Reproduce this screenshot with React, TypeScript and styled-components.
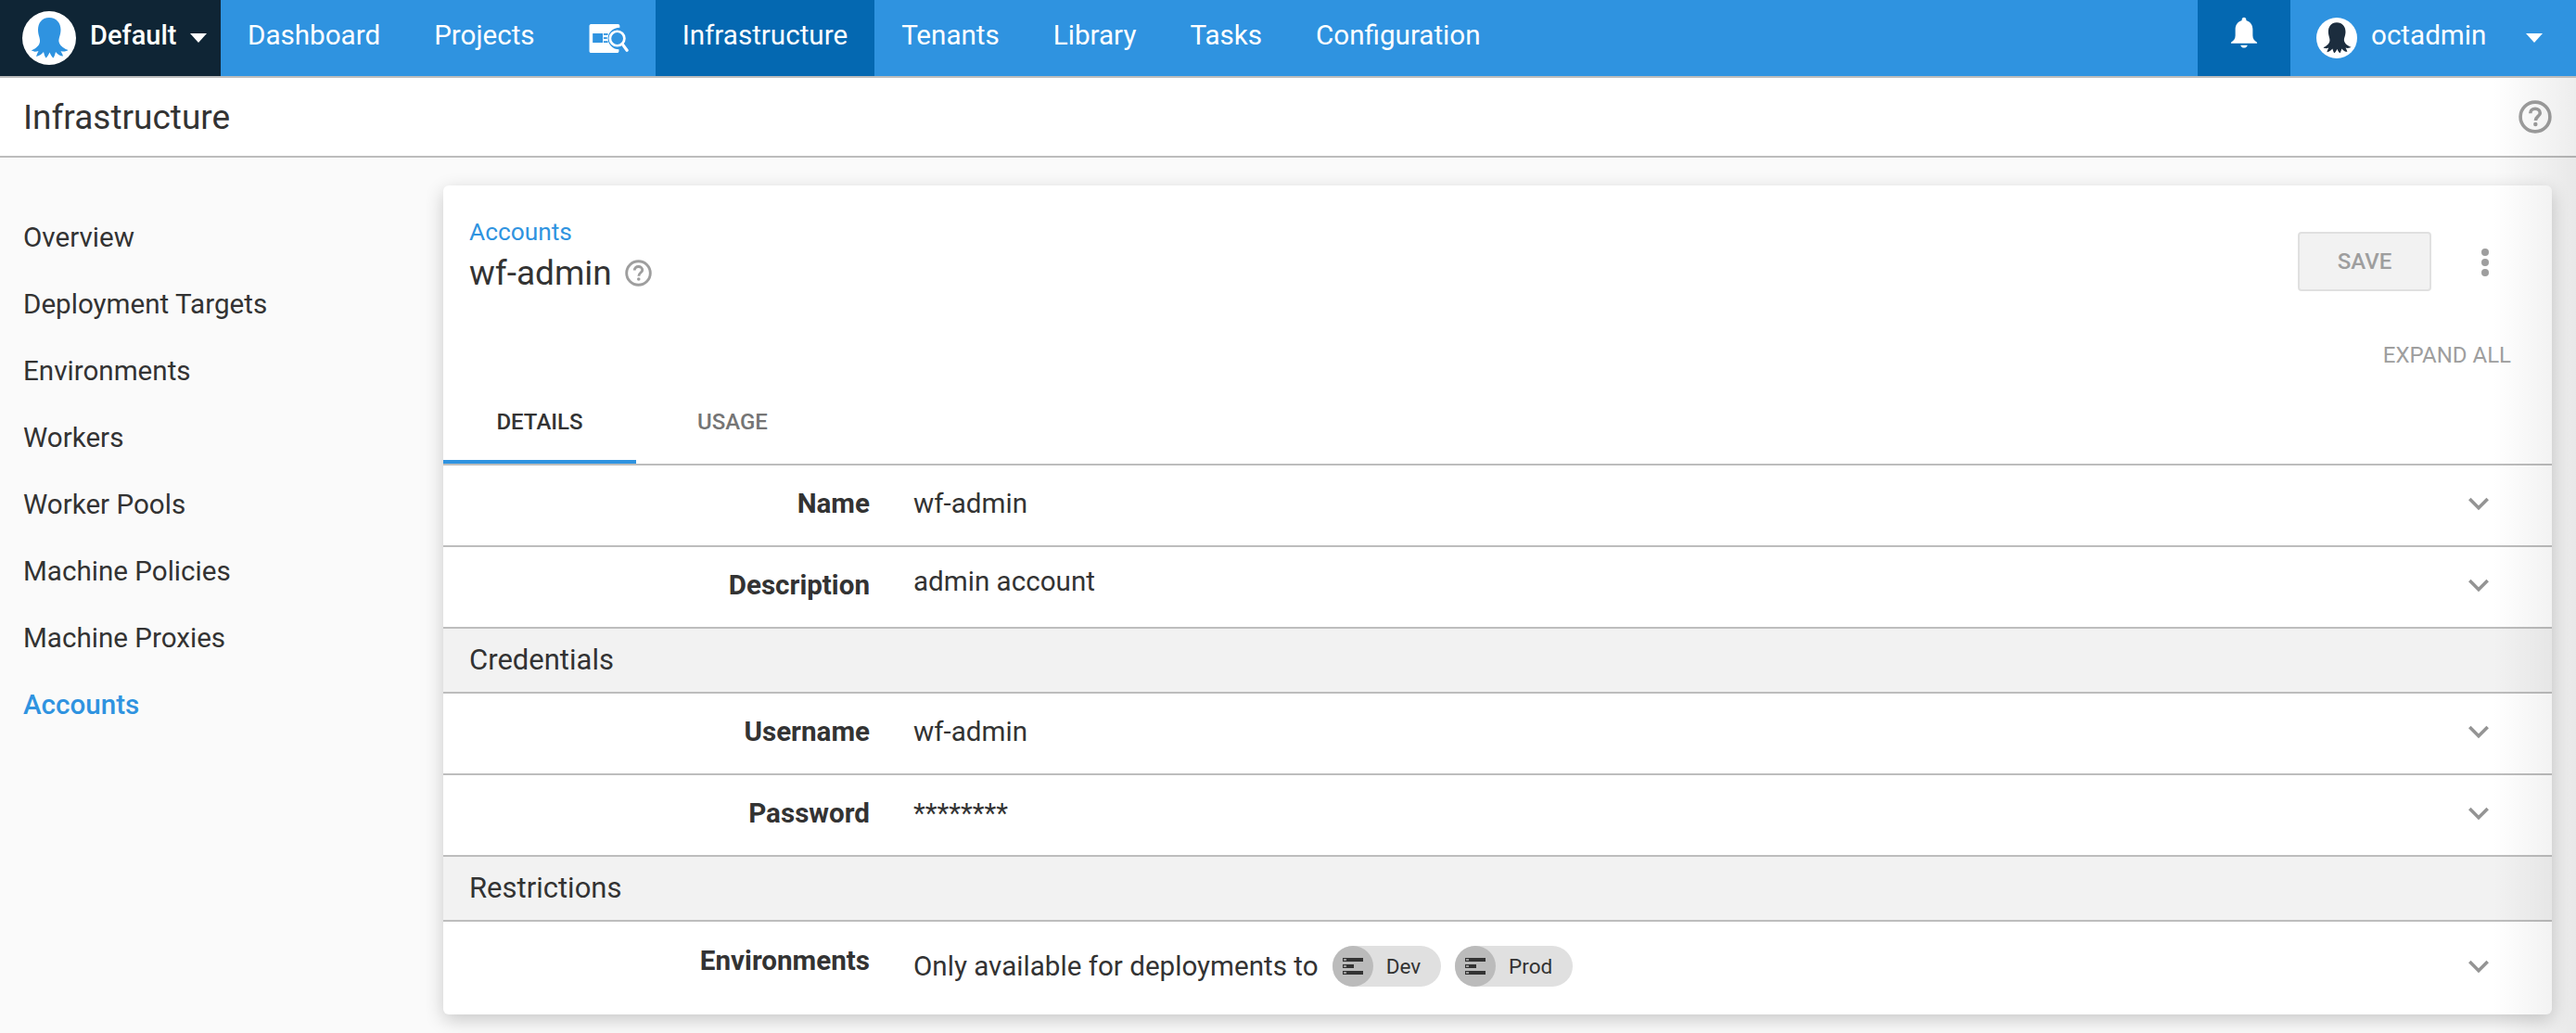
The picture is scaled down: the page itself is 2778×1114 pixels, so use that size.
import React from 'react';
import styled, { createGlobalStyle } from 'styled-components';

const GlobalStyle = createGlobalStyle`
  html, body {
    margin: 0;
    padding: 0;
    height: 100%;
    background: #fafafa;
    font-family: Roboto, "Liberation Sans", sans-serif;
    color: #333;
    overflow: hidden;
  }
  * { box-sizing: border-box; }
`;

const navItems = [
  { label: 'Dashboard' },
  { label: 'Projects' },
  { label: 'search', icon: true },
  { label: 'Infrastructure', active: true },
  { label: 'Tenants' },
  { label: 'Library' },
  { label: 'Tasks' },
  { label: 'Configuration' },
];

const sideItems = [
  'Overview',
  'Deployment Targets',
  'Environments',
  'Workers',
  'Worker Pools',
  'Machine Policies',
  'Machine Proxies',
  'Accounts',
];

const OctopusMark = ({ color }: { color: string }) => (
  <svg width="100%" height="100%" viewBox="0 0 58 58">
    <path
      fill={color}
      d="M29 7C21 7 17 13 17 20C17 26 19.500 29 19 33C18.500 38 13 41 10 42.500C11.500 44 15 44 17.500 43C16.500 45 15.500 47 15 49C18 48.500 21 46.500 23 44C23.500 46.500 24.500 49 25.500 50.500C27 49.500 28.500 47 29.500 44.500C30.500 47 32 49.500 33.500 50.500C34.500 49 35.500 46.500 36 44C38 46.500 41 48.500 44 48.500C43.500 46.500 42.500 45 41.500 43C44 44 47.500 43.500 49.500 42C46.500 41 40.500 38 39.500 33C39 29 41.500 26 41.500 20C41.500 13 37 7 29 7Z"
    />
  </svg>
);

const Caret = () => (
  <svg width="18" height="10" viewBox="0 0 18 10">
    <path fill="#fff" d="M0 0H18L9 10Z" />
  </svg>
);

const HelpIcon = ({ size }: { size: number }) => (
  <svg width={size} height={size} viewBox="0 0 24 24" fill="none">
    <circle cx="12" cy="12" r="10.600" stroke="#9e9e9e" strokeWidth="2.400" />
    <path
      d="M8.500 9.500C8.500 7.500 10 6.200 12 6.200C14 6.200 15.500 7.500 15.500 9.300C15.500 11.500 12.300 11.800 12.300 14.600"
      stroke="#9e9e9e"
      strokeWidth="2.400"
    />
    <circle cx="12.200" cy="17.400" r="1.500" fill="#9e9e9e" />
  </svg>
);

const Chevron = () => (
  <svg width="22" height="15" viewBox="0 0 22 15" fill="none">
    <path d="M1.300 2L11 11.700L20.700 2" stroke="#949494" strokeWidth="3.600" />
  </svg>
);

const SearchCard = () => (
  <SearchSvg width="43" height="31" viewBox="0 0 46 34">
    <path
      fill="#fff"
      d="M2 0H34C35 0 36 1 36 2V4C28 4 22 10 22 17C22 24 28 30 35 30V32C35 33 34 34 33 34H2C1 34 0 33 0 32V2C0 1 1 0 2 0Z"
    />
    <rect x="4" y="11" width="12" height="11" fill="#2f93e0" />
    <rect x="17" y="11" width="5" height="2" fill="#2f93e0" />
    <rect x="17" y="15.500" width="4" height="2" fill="#2f93e0" />
    <rect x="17" y="20" width="5" height="2" fill="#2f93e0" />
    <circle cx="33" cy="17" r="8.500" fill="none" stroke="#fff" strokeWidth="3" />
    <path d="M39 23.500L44.500 31" stroke="#fff" strokeWidth="3.500" strokeLinecap="round" />
  </SearchSvg>
);

const ServerIcon = () => (
  <svg width="22" height="18" viewBox="0 0 22 18">
    <rect x="0" y="0" width="22" height="4" fill="#333" />
    <rect x="0" y="7" width="12" height="4" fill="#333" />
    <rect x="0" y="14" width="22" height="4" fill="#333" />
    <rect x="1" y="1" width="3" height="2" fill="#9a9a9a" />
    <rect x="1" y="8" width="3" height="2" fill="#9a9a9a" />
    <rect x="1" y="15" width="3" height="2" fill="#9a9a9a" />
  </svg>
);

const Chip = ({ name }: { name: string }) => (
  <ChipBox>
    <ChipIcon>
      <ServerIcon />
    </ChipIcon>
    <ChipLabel>{name}</ChipLabel>
  </ChipBox>
);

const App: React.FC = () => {
  return (
    <Page>
      <GlobalStyle />
      <TopBar>
        <SpaceSwitch>
          <LogoCircle>
            <OctopusMark color="#2f93e0" />
          </LogoCircle>
          <SpaceName>Default</SpaceName>
          <Caret />
        </SpaceSwitch>
        {navItems.map((item) => (
          <NavItem key={item.label} $active={item.active}>
            {item.icon ? <SearchCard /> : item.label}
          </NavItem>
        ))}
        <NavSpacer />
        <BellBox>
          <svg width="30" height="35" viewBox="0 0 32 36">
            <path
              fill="#fff"
              d="M16 0C17.500 0 18.500 1 18.500 2.500V3.500C23.500 5 26 9 26 14V21C26 25 28 27 31 29V30H1V29C4 27 6 25 6 21V14C6 9 8.500 5 13.500 3.500V2.500C13.500 1 14.500 0 16 0ZM12 32H20C19.500 34 18 35 16 35C14 35 12.500 34 12 32Z"
            />
          </svg>
        </BellBox>
        <UserBox>
          <UserAvatar>
            <OctopusMark color="#1c2d3e" />
          </UserAvatar>
          <UserName>octadmin</UserName>
          <Caret />
        </UserBox>
      </TopBar>

      <AreaHeader>
        <AreaTitle>Infrastructure</AreaTitle>
        <HelpIcon size={36} />
      </AreaHeader>

      <Body>
        <Sidebar>
          {sideItems.map((item) => (
            <SideLink key={item} $active={item === 'Accounts'}>
              {item}
            </SideLink>
          ))}
        </Sidebar>

        <Card>
          <CardHead>
            <div>
              <Crumb>Accounts</Crumb>
              <TitleRow>
                <CardTitle>wf-admin</CardTitle>
                <HelpIcon size={29} />
              </TitleRow>
            </div>
            <HeadActions>
              <SaveButton>SAVE</SaveButton>
              <Dots>
                <Dot />
                <Dot />
                <Dot />
              </Dots>
            </HeadActions>
          </CardHead>

          <ExpandRow>EXPAND ALL</ExpandRow>

          <Tabs>
            <Tab $active>DETAILS</Tab>
            <Tab>USAGE</Tab>
          </Tabs>

          <Row>
            <RowLabel>Name</RowLabel>
            <RowValue>wf-admin</RowValue>
            <Chevron />
          </Row>
          <Row>
            <RowLabel>Description</RowLabel>
            <RowValue $up>admin account</RowValue>
            <Chevron />
          </Row>
          <Section>Credentials</Section>
          <Row>
            <RowLabel>Username</RowLabel>
            <RowValue>wf-admin</RowValue>
            <Chevron />
          </Row>
          <Row>
            <RowLabel>Password</RowLabel>
            <RowValue>********</RowValue>
            <Chevron />
          </Row>
          <Section>Restrictions</Section>
          <LastRow>
            <RowLabel $up>Environments</RowLabel>
            <RowValue>
              Only available for deployments to
              <Chip name="Dev" />
              <Chip name="Prod" />
            </RowValue>
            <Chevron />
          </LastRow>
        </Card>
      </Body>
      <EdgeShade />
    </Page>
  );
};

const Page = styled.div`
  position: relative;
  width: 100%;
  height: 100vh;
  overflow: hidden;
`;

const TopBar = styled.div`
  display: flex;
  height: 84px;
  background: #2f93e0;
  border-bottom: 2px solid #bdbdbd;
`;

const SpaceSwitch = styled.div`
  display: flex;
  align-items: center;
  width: 238px;
  padding-left: 24px;
  background: #0f2535;
`;

const LogoCircle = styled.div`
  width: 58px;
  height: 58px;
  border-radius: 50%;
  background: #fff;
`;

const SpaceName = styled.span`
  margin: 0 14px 6px 15px;
  color: #fff;
  font-size: 29px;
  font-weight: 500;
`;

const NavItem = styled.div<{ $active?: boolean }>`
  display: flex;
  align-items: center;
  padding: 0 29px 6px;
  color: #fff;
  font-size: 29.600px;
  background: ${(props) => (props.$active ? '#0468b1' : 'transparent')};
`;

const SearchSvg = styled.svg`
  margin-top: 6px;
`;

const NavSpacer = styled.div`
  flex: 1;
`;

const BellBox = styled.div`
  display: flex;
  align-items: center;
  justify-content: center;
  width: 100px;
  padding-bottom: 12px;
  background: #0468b1;
`;

const UserBox = styled.div`
  display: flex;
  align-items: center;
  width: 308px;
  padding-left: 28px;
`;

const UserAvatar = styled.div`
  width: 44px;
  height: 44px;
  border-radius: 50%;
  background: #fff;
`;

const UserName = styled.span`
  width: 167px;
  margin: 0 0 6px 15px;
  color: #fff;
  font-size: 29.600px;
`;

const AreaHeader = styled.div`
  display: flex;
  align-items: center;
  justify-content: space-between;
  height: 86px;
  padding: 0 26px 0 25px;
  background: #fff;
  border-bottom: 2px solid #bdbdbd;
`;

const AreaTitle = styled.h1`
  margin: 0;
  font-size: 37px;
  font-weight: 400;
`;

const Body = styled.div`
  display: flex;
  padding: 30px 26px 0 0;
`;

const Sidebar = styled.nav`
  display: flex;
  flex-direction: column;
  flex: none;
  width: 478px;
  padding: 20px 0 0 25px;
`;

const SideLink = styled.a<{ $active?: boolean }>`
  height: 72px;
  line-height: 72px;
  font-size: 29.600px;
  font-weight: ${(props) => (props.$active ? 500 : 400)};
  color: ${(props) => (props.$active ? '#2f93e0' : '#333')};
`;

const Card = styled.main`
  flex: 1;
  height: 894px;
  background: #fff;
  border-radius: 6px;
  box-shadow: 0 6px 20px rgba(0, 0, 0, 0.2);
`;

const CardHead = styled.div`
  display: flex;
  justify-content: space-between;
  height: 148px;
  padding: 34px 0 0 28px;
`;

const Crumb = styled.div`
  color: #2f93e0;
  font-size: 26.300px;
  line-height: 32px;
`;

const TitleRow = styled.div`
  display: flex;
  align-items: center;
  gap: 14px;
  margin-top: 6px;
`;

const CardTitle = styled.div`
  font-size: 37px;
  line-height: 45px;
`;

const HeadActions = styled.div`
  display: flex;
  align-items: flex-start;
  margin-top: 16px;
  padding-right: 68px;
`;

const SaveButton = styled.div`
  width: 144px;
  height: 64px;
  line-height: 60px;
  text-align: center;
  color: #9e9e9e;
  background: #f2f2f2;
  border: 2px solid #e0e0e0;
  border-radius: 4px;
  font-size: 24px;
  font-weight: 500;
`;

const Dots = styled.div`
  display: flex;
  flex-direction: column;
  gap: 3px;
  margin: 18px 0 0 54px;
`;

const Dot = styled.span`
  width: 8px;
  height: 8px;
  border-radius: 50%;
  background: #9e9e9e;
`;

const ExpandRow = styled.div`
  height: 70px;
  padding-right: 44px;
  text-align: right;
  color: #9e9e9e;
  font-size: 24px;
  line-height: 71px;
`;

const Tabs = styled.div`
  display: flex;
  height: 84px;
  border-bottom: 2px solid #bdbdbd;
`;

const Tab = styled.div<{ $active?: boolean }>`
  width: 208px;
  height: 82px;
  text-align: center;
  line-height: 74px;
  font-size: 24px;
  font-weight: 500;
  color: ${(props) => (props.$active ? '#333' : '#757575')};
  border-bottom: ${(props) => (props.$active ? '4px solid #2f93e0' : 'none')};
`;

const Row = styled.div`
  display: flex;
  align-items: center;
  height: 88px;
  padding: 0 68px 4px 0;
  border-bottom: 2px solid #bdbdbd;
`;

const LastRow = styled.div`
  display: flex;
  align-items: center;
  height: 100px;
  padding: 0 68px 4px 0;
`;

const RowLabel = styled.div<{ $up?: boolean }>`
  flex: none;
  width: 460px;
  text-align: right;
  font-size: 29.600px;
  font-weight: 700;
  transform: ${(props) => (props.$up ? 'translateY(-6px)' : 'none')};
`;

const RowValue = styled.div<{ $up?: boolean }>`
  display: flex;
  align-items: center;
  flex: 1;
  margin-left: 47px;
  font-size: 29.600px;
  transform: ${(props) => (props.$up ? 'translateY(-4px)' : 'none')};
`;

const Section = styled.div`
  display: flex;
  align-items: center;
  height: 70px;
  padding: 0 0 2px 28px;
  background: #f2f2f2;
  border-bottom: 2px solid #bdbdbd;
  font-size: 31px;
`;

const ChipBox = styled.span`
  display: inline-flex;
  align-items: center;
  height: 44px;
  margin-left: 15px;
  background: #e0e0e0;
  border-radius: 22px;
`;

const ChipIcon = styled.span`
  display: flex;
  align-items: center;
  justify-content: center;
  width: 44px;
  height: 44px;
  border-radius: 50%;
  background: #bbb;
`;

const ChipLabel = styled.span`
  padding: 0 22px 0 14px;
  font-size: 22.500px;
`;

const EdgeShade = styled.div`
  position: absolute;
  top: 84px;
  right: 0;
  bottom: 0;
  width: 90px;
  background: linear-gradient(to right, rgba(0, 0, 0, 0), rgba(0, 0, 0, 0.07));
  pointer-events: none;
`;

export default App;
